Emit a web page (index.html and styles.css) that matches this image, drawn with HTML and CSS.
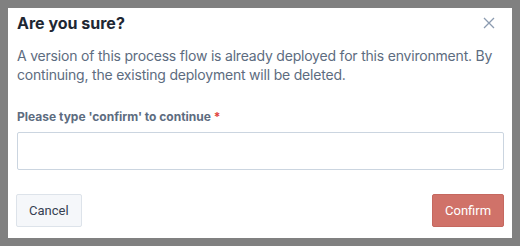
FILE: index.html
```html
<!DOCTYPE html>
<html lang="en">
<head>
  <meta charset="UTF-8" />
  <title>Are you sure?</title>
  <link rel="stylesheet" href="styles.css">
</head>
<body>
  <div class="modal">
    <div class="modal-header">
      <h2 class="modal-title">Are you sure?</h2>
      <button class="close-btn" aria-label="Close">
        <svg width="12" height="12" viewBox="0 0 12 12">
          <path d="M1 1 L11 11 M11 1 L1 11" stroke="#8b9bb0" stroke-width="1.3" fill="none" />
        </svg>
      </button>
    </div>

    <p class="modal-text">A version of this process flow is already deployed for this environment. By continuing, the existing deployment will be deleted.</p>

    <div class="field">
      <label class="field-label" for="confirm-input">Please type 'confirm' to continue <span class="required">*</span></label>
      <input id="confirm-input" class="field-input" type="text" />
    </div>

    <div class="modal-footer">
      <button class="btn btn-cancel">Cancel</button>
      <button class="btn btn-confirm">Confirm</button>
    </div>
  </div>
</body>
</html>
```

FILE: styles.css
```css
* {
  box-sizing: border-box;
}

body {
  margin: 0;
  padding: 8px;
  background: #808080;
  font-family: 'Inter', sans-serif;
  height: 246px;
  overflow: hidden;
}

.modal {
  width: 504px;
  height: 230px;
  background: #ffffff;
  padding: 4px 8px 0 9px;
}

.modal-header {
  display: flex;
  justify-content: space-between;
  align-items: center;
  height: 22px;
}

.modal-title {
  margin: 0;
  font-size: 16px;
  font-weight: 700;
  line-height: 22px;
  color: #1e2733;
}

.close-btn {
  background: none;
  border: none;
  padding: 0;
  margin-right: 9px;
  width: 12px;
  height: 12px;
  display: flex;
}

.modal-text {
  margin: 12px 0 0;
  font-size: 14px;
  line-height: 19px;
  letter-spacing: -0.2px;
  color: #5d6c80;
}

.field {
  margin-top: 25px;
}

.field-label {
  display: block;
  font-size: 12px;
  font-weight: 700;
  line-height: 16px;
  color: #5d6c80;
}

.required {
  color: #e0413a;
}

.field-input {
  display: block;
  width: 487px;
  height: 38px;
  margin-top: 7px;
  border: 1px solid #cbd5e0;
  border-radius: 2px;
  background: #ffffff;
}

.modal-footer {
  display: flex;
  justify-content: space-between;
  margin-top: 24px;
  margin-left: -1px;
}

.btn {
  height: 33px;
  padding: 0 12px;
  font-family: 'Roboto', sans-serif;
  font-size: 13px;
  border-radius: 2px;
}

.btn-cancel {
  background: #f5f7fa;
  border: 1px solid #dde3ea;
  color: #364152;
}

.btn-confirm {
  background: #d07269;
  border: 1px solid #c5685f;
  color: #ffffff;
  width: 72px;
}
```
